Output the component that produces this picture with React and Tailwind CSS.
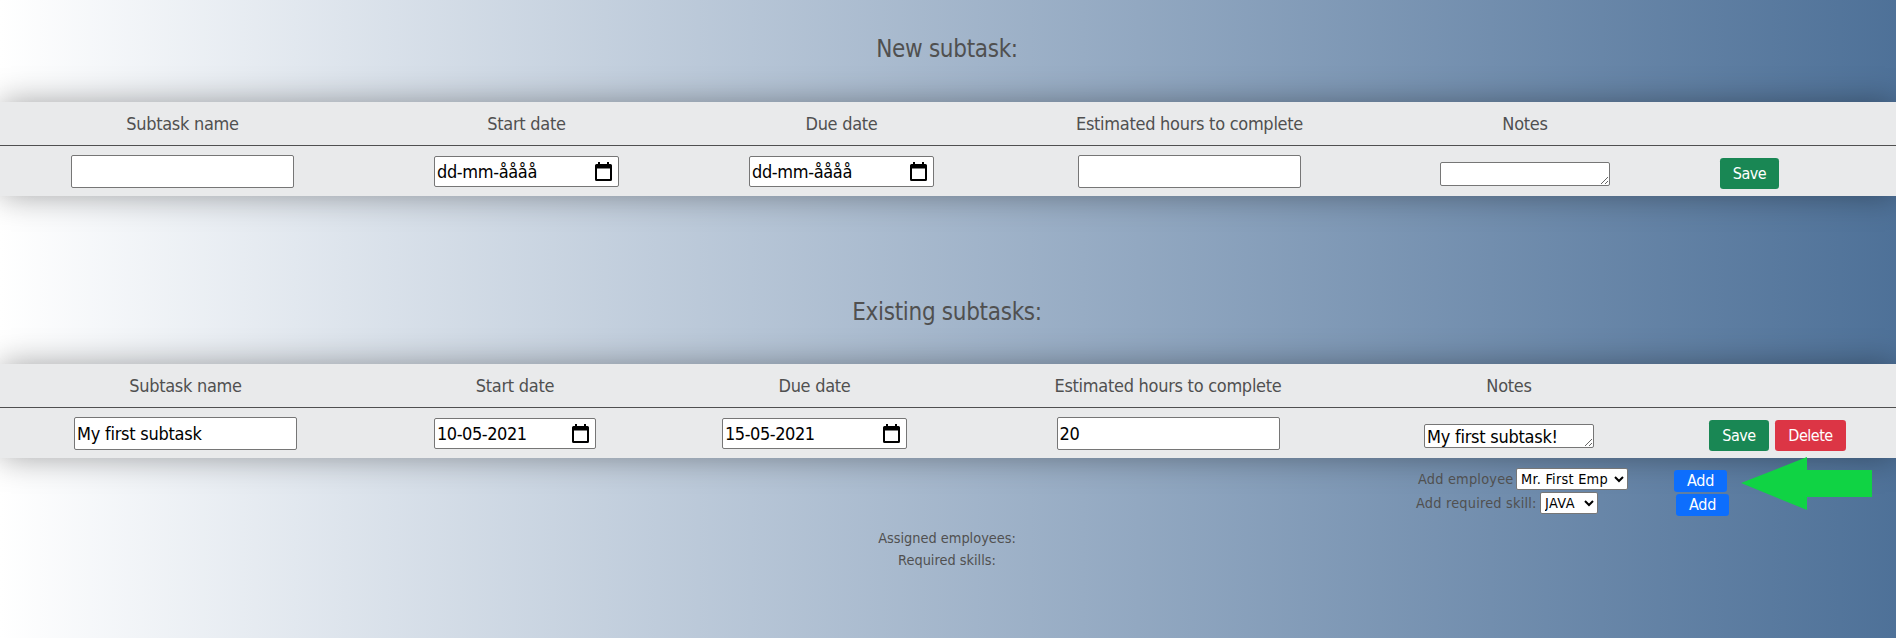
const cell = "flex items-center justify-center shrink-0";

function Label({ children }) {
  return <span className="flex justify-center whitespace-nowrap pt-[2px]">{children}</span>;
}

function DateField({ value, wide }) {
  return (
    <div
      className={
        "flex h-[31px] items-center justify-between rounded-[2px] border border-[#767676] bg-white pl-[2px] pr-[6px] text-black " +
        (wide ? "w-[185px]" : "w-[162px]")
      }
    >
      <span className={value.startsWith("dd") ? "tracking-[-0.35px]" : "tracking-[-0.45px]"}>{value}</span>
      <svg width="17" height="19" viewBox="0 0 17 19" className="shrink-0">
        <path
          fillRule="evenodd"
          d="M3 0h2v2h7V0h2v2h1.500q1.500 0 1.500 1.500v14q0 1.500-1.500 1.500h-14Q0 19 0 17.500v-14Q0 2 1.500 2H3zM2 6.500V17h13V6.500z"
          fill="#000"
        />
      </svg>
    </div>
  );
}

const inputCls =
  "h-[33px] w-[223px] rounded-[2px] border border-[#767676] bg-white px-[2px] text-black tracking-[-0.25px] outline-none";
const areaCls =
  "block h-6 w-[170px] resize overflow-hidden rounded-[2px] border border-[#767676] bg-white px-[2px] pt-px text-black leading-[22px] tracking-[-0.25px] outline-none";
const btn = "h-[31px] rounded-[3.2px] pt-px text-base text-white tracking-[-0.5px]";
const add = "h-[22px] w-[53px] rounded-[3.2px] bg-[#0d6efd] text-base leading-[22px] text-white tracking-[-0.2px]";

function Panel({ cols, values, children }) {
  const heads = ["Subtask name", "Start date", "Due date", "Estimated hours to complete", "Notes"];
  return (
    <section className="h-[94px] w-full bg-[#e9eaeb] text-lg shadow-[0_0_30px_rgba(0,0,0,0.35)]">
      <div className="flex h-11 border-b border-[#505050] pb-px tracking-[-0.28px]">
        {heads.map((h, i) => (
          <div key={h} className={cell} style={{ width: cols[i] }}>
            <Label>{h}</Label>
          </div>
        ))}
      </div>
      <div className="flex h-[50px] items-start pt-[9px]">
        <div className={cell} style={{ width: cols[0] }}>
          <input className={inputCls} defaultValue={values[0]} />
        </div>
        <div className={cell + " pt-px"} style={{ width: cols[1] }}>
          <DateField value={values[1]} wide={!values[0]} />
        </div>
        <div className={cell + " pt-px"} style={{ width: cols[2] }}>
          <DateField value={values[2]} wide />
        </div>
        <div className={cell} style={{ width: cols[3] }}>
          <input className={inputCls} defaultValue={values[3]} />
        </div>
        <div className={cell + " pt-[7px]"} style={{ width: cols[4] }}>
          <textarea className={areaCls} rows={1} defaultValue={values[4]} />
        </div>
        <div className="flex gap-[6px] pt-[3px]">{children}</div>
      </div>
    </section>
  );
}

export default function App() {
  return (
    <main className="relative h-[638px] w-full overflow-hidden bg-linear-to-r from-white to-[#4e7198] font-['DejaVu_Sans_Condensed','DejaVu_Sans',sans-serif] text-[#505050] [font-stretch:condensed]">
      <h1 className="flex h-[102px] items-center justify-center pb-[4px] pr-[2px] text-2xl tracking-[-0.3px]">New subtask:</h1>
      <Panel cols={[365, 323, 307, 389, 282]} values={["", "dd-mm-åååå", "dd-mm-åååå", "", ""]}>
        <button className={btn + " ml-[54px] w-[59px] bg-[#198754]"}>Save</button>
      </Panel>
      <h1 className="flex h-[168px] items-end justify-center pb-[36px] pr-[2px] text-2xl tracking-[-0.3px]">Existing subtasks:</h1>
      <Panel cols={[371, 288, 311, 396, 286]} values={["My first subtask", "10-05-2021", "15-05-2021", "20", "My first subtask!"]}>
        <button className={btn + " ml-[57px] w-[60px] bg-[#198754]"}>Save</button>
        <button className={btn + " w-[71px] bg-[#dc3545]"}>Delete</button>
      </Panel>
      <div className="flex h-[58px] pt-[10px] text-[14.4px]">
        <div className="ml-[1416px] flex w-[258px] flex-col gap-[2px]">
          <label className="flex h-[22px] items-center gap-[4px] pl-[2px]">
            <span className="w-[94px] whitespace-nowrap pt-px tracking-[0.2px]">Add employee</span>
            <select className="h-[22px] w-[112px] rounded-[2px] border border-[#767676] bg-white text-black tracking-[0.25px]">
              <option>Mr. First Emp</option>
            </select>
          </label>
          <label className="flex h-[22px] items-center gap-[4px]">
            <span className="w-[120px] whitespace-nowrap pt-px tracking-[0.2px]">Add required skill:</span>
            <select className="h-[22px] w-[58px] rounded-[2px] border border-[#767676] bg-white text-black tracking-[0.4px]">
              <option>JAVA</option>
            </select>
          </label>
        </div>
        <div className="flex flex-col gap-[2px] pt-[2px]">
          <button className={add}>Add</button>
          <button className={add + " ml-[2px]"}>Add</button>
        </div>
      </div>
      <div className="flex flex-col items-center pr-[2px] pt-[11px] text-[14.4px] leading-[22px]">
        <p>Assigned employees:</p>
        <p>Required skills:</p>
      </div>
      <svg className="absolute left-[1741px] top-[457px]" width="131" height="53" viewBox="0 0 131 53">
        <path d="M0 26 66 0v13h65v27H66v13z" fill="#10d344" />
      </svg>
    </main>
  );
}
